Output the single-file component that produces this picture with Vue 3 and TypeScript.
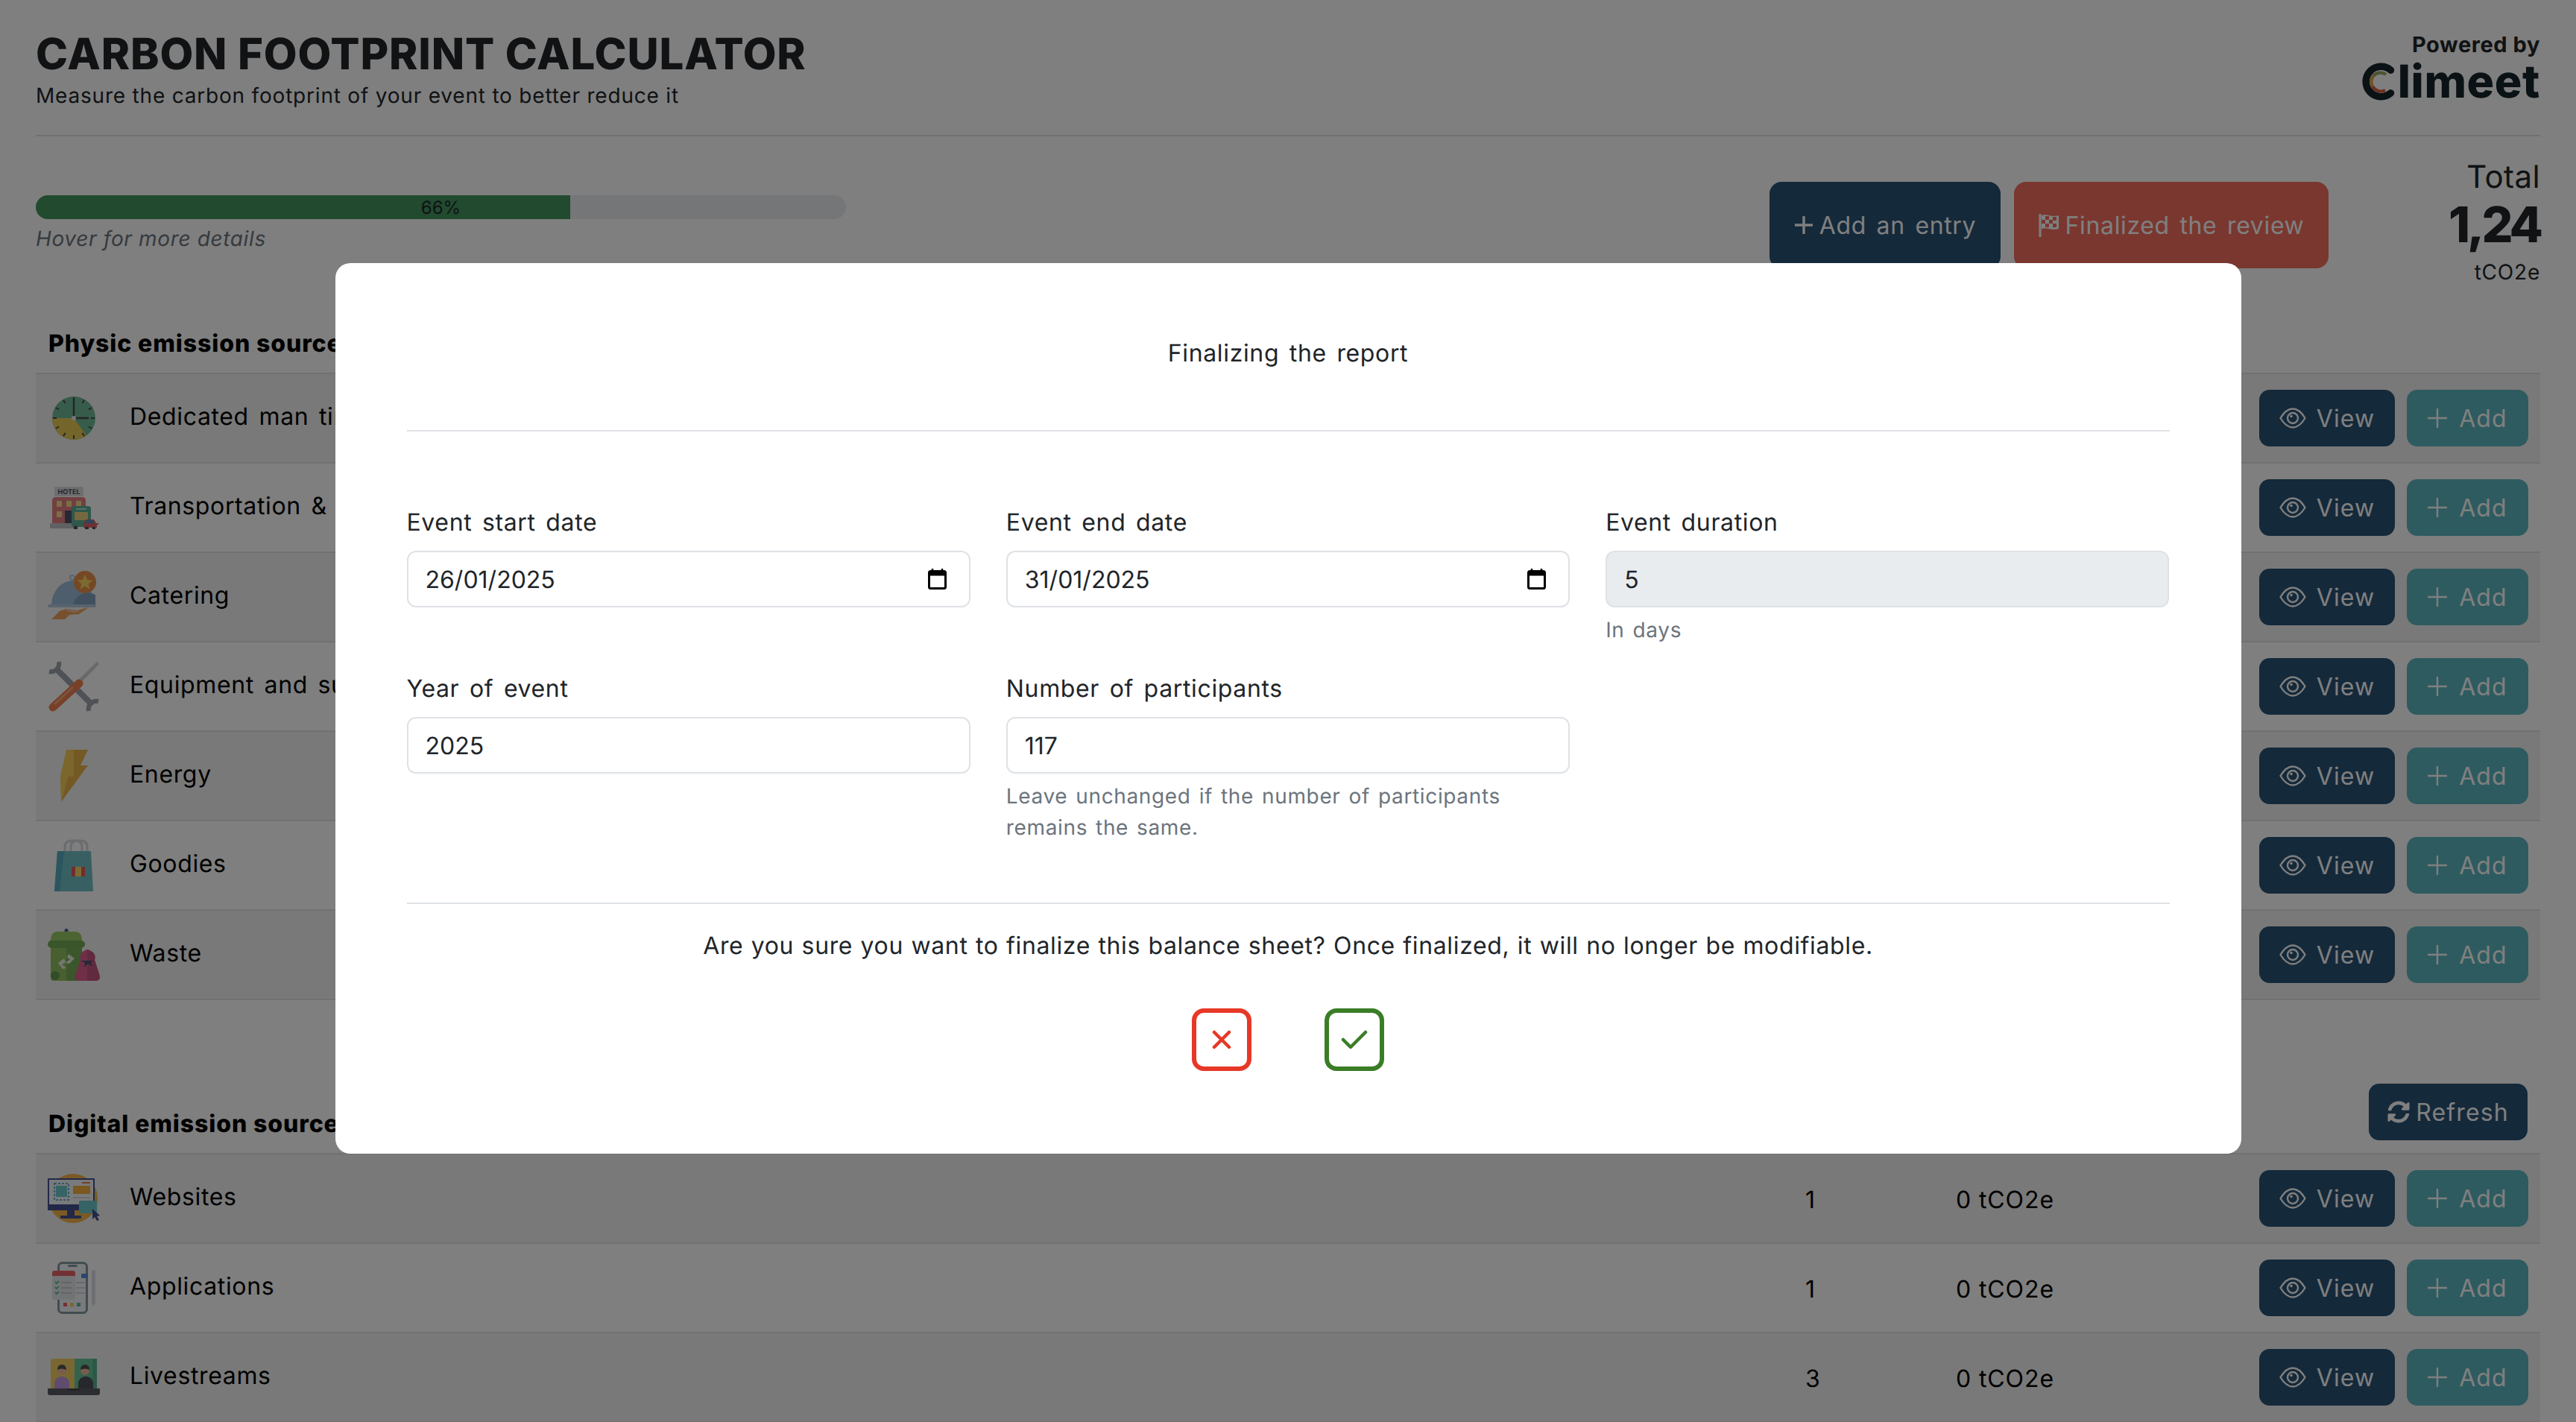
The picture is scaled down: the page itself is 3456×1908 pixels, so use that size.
<script setup lang="ts">
interface Source {
  key: string
  name: string
  count?: number
  co2?: string
}

const physicSources: Source[] = [
  { key: 'clock', name: 'Dedicated man time' },
  { key: 'hotel', name: 'Transportation & stay' },
  { key: 'catering', name: 'Catering' },
  { key: 'tools', name: 'Equipment and supply' },
  { key: 'energy', name: 'Energy' },
  { key: 'goodies', name: 'Goodies' },
  { key: 'waste', name: 'Waste' },
]

const digitalSources: Source[] = [
  { key: 'website', name: 'Websites', count: 1, co2: '0 tCO2e' },
  { key: 'app', name: 'Applications', count: 1, co2: '0 tCO2e' },
  { key: 'live', name: 'Livestreams', count: 3, co2: '0 tCO2e' },
]

const sections = [
  { title: 'Physic emission sources', refresh: false, rows: physicSources },
  { title: 'Digital emission sources', refresh: true, rows: digitalSources },
]

const progress = 66
const clockTicks = Array.from({ length: 12 }, (_, i) => i * 30)
</script>

<template>
  <div class="page">
    <header class="top">
      <div>
        <h1>CARBON FOOTPRINT CALCULATOR</h1>
        <p class="subtitle">Measure the carbon footprint of your event to better reduce it</p>
      </div>
      <div class="brand">
        <div class="powered">Powered by</div>
        <div class="logo">
          <svg class="logo-c" viewBox="0 0 44 48" width="47" height="51">
            <path d="M37 9.5A19 19 0 1 0 37 38.5" fill="none" stroke="#14252b" stroke-width="9" stroke-linecap="round" />
            <path d="M31 15A12 12 0 0 0 15 17" fill="none" stroke="#9aa860" stroke-width="4" />
            <path d="M15 17A12 12 0 0 0 14 30" fill="none" stroke="#d9a545" stroke-width="4" />
            <path d="M14 30A12 12 0 0 0 30 35" fill="none" stroke="#d9603a" stroke-width="4" />
          </svg>
          <span>limeet</span>
        </div>
      </div>
    </header>

    <section class="summary">
      <div class="progress-wrap">
        <div class="progress">
          <div class="progress-fill" :style="{ width: progress + '%' }"></div>
          <span>{{ progress }}%</span>
        </div>
        <em>Hover for more details</em>
      </div>
      <div class="summary-actions">
        <button class="btn btn-dark">
          <svg viewBox="0 0 26 26" width="26" height="26"><path d="M13 1v24M1 13h24" stroke="currentColor" stroke-width="3.4" /></svg>
          Add an entry
        </button>
        <button class="btn btn-red">
          <svg viewBox="0 0 28 32" width="28" height="32">
            <path d="M2 1v31" stroke="currentColor" stroke-width="3" />
            <path d="M4 3c7-3 12 3 23 0v18c-10 3-16-3-23 0z" fill="currentColor" />
            <path d="M9 4h5v5H9zM19 5h5v5h-5zM14 9h5v5h-5zM4 9h5v5H4zM9 14h5v5H9zM19 14h5v5h-5z" fill="#f46e5e" />
          </svg>
          Finalized the review
        </button>
      </div>
      <div class="total">
        <div class="total-label">Total</div>
        <div class="total-value">1,24</div>
        <div class="total-unit">tCO2e</div>
      </div>
    </section>

    <section v-for="section in sections" :key="section.title" class="sources" :class="{ 'with-refresh': section.refresh }">
      <div class="sources-head">
        <h2>{{ section.title }}</h2>
        <button v-if="section.refresh" class="btn btn-dark btn-refresh">
          <svg viewBox="0 0 512 512" width="30" height="30">
            <path fill="currentColor" d="M370.72 133.28C339.458 104.008 298.888 87.962 255.848 88c-77.458.068-144.328 53.178-162.791 126.85-1.344 5.363-6.122 9.15-11.651 9.15H24.103c-7.498 0-13.194-6.807-11.807-14.176C33.933 94.924 134.813 8 256 8c66.448 0 126.791 26.136 171.315 68.685L463.03 40.97C478.149 25.851 504 36.559 504 57.941V192c0 13.255-10.745 24-24 24H345.941c-21.382 0-32.09-25.851-16.971-40.971l41.75-41.749zM32 296h134.059c21.382 0 32.09 25.851 16.971 40.971l-41.75 41.75c31.262 29.273 71.835 45.319 114.876 45.28 77.418-.07 144.315-53.144 162.787-126.849 1.344-5.363 6.122-9.15 11.651-9.15h57.304c7.498 0 13.194 6.807 11.807 14.176C478.067 417.076 377.187 504 256 504c-66.448 0-126.791-26.136-171.315-68.685L48.97 471.03C33.851 486.149 8 475.441 8 454.059V320c0-13.255 10.745-24 24-24z" />
          </svg>
          Refresh
        </button>
      </div>
      <div class="rows">
        <div v-for="row in section.rows" :key="row.key" class="row">
          <svg class="row-icon" viewBox="0 0 70 70" width="70" height="70">
            <template v-if="row.key === 'clock'">
              <path d="M35 0A35 35 0 0 1 35 70A33 33 0 0 0 35 0Z" fill="#c4c6cc" />
              <circle cx="35" cy="35" r="29" fill="#58ae88" />
              <path d="M35 35L6 35A29 29 0 0 0 52 58.5Z" fill="#e8c53a" />
              <line v-for="a in clockTicks" :key="a" x1="35" y1="7" x2="35" y2="12" stroke="#2a2d33" stroke-width="2" :transform="`rotate(${a} 35 35)`" />
              <path d="M35 35V9M35 35H55" stroke="#2a2d33" stroke-width="2.4" fill="none" />
              <circle cx="35" cy="35" r="3" fill="#e9edf0" />
            </template>
            <template v-else-if="row.key === 'hotel'">
              <rect x="9" y="7" width="39" height="13" rx="2" fill="#d5d7dc" />
              <text x="28.5" y="17" text-anchor="middle" class="hotel-text">HOTEL</text>
              <path d="M6 56V26q0-5 5-5h35q5 0 5 5v30z" fill="#e0696e" />
              <rect x="12" y="26" width="7" height="8" rx="1" fill="#f6d77b" />
              <rect x="25" y="26" width="7" height="8" rx="1" fill="#f6d77b" />
              <rect x="38" y="26" width="7" height="8" rx="1" fill="#f6d77b" />
              <rect x="12" y="40" width="7" height="8" rx="1" fill="#f6d77b" />
              <rect x="23" y="39" width="12" height="17" fill="#2e3350" />
              <rect x="3" y="56" width="36" height="7" rx="1" fill="#b6b8be" />
              <rect x="32" y="33" width="26" height="28" rx="4" fill="#3fa385" />
              <rect x="36" y="41" width="18" height="11" rx="1" fill="#e8c86a" />
              <rect x="38" y="36" width="14" height="2" fill="#9fe0cc" />
              <rect x="35" y="60" width="5" height="4" fill="#2a2d33" />
              <rect x="50" y="60" width="5" height="4" fill="#2a2d33" />
              <path d="M48 62v-6l3-5h11l3 5h3v2h-2v4z" fill="#d8484e" />
              <path d="M52 52h9l2 4H50z" fill="#3578b5" />
              <rect x="50" y="61" width="4" height="3" fill="#2a2d33" />
              <rect x="60" y="61" width="4" height="3" fill="#2a2d33" />
            </template>
            <template v-else-if="row.key === 'catering'">
              <circle cx="33" cy="9" r="3" fill="none" stroke="#a9c3dc" stroke-width="2" />
              <path d="M5 46a29 33 0 0 1 58 0z" fill="#8fb3d4" />
              <path d="M34 46a20 18 0 0 1 30 -14v14z" fill="#6f93b6" />
              <rect x="0" y="45" width="65" height="4" rx="2" fill="#a9c3dc" />
              <circle cx="50" cy="15" r="15" fill="#e97f2e" />
              <path d="M50 5l3 7 7.500 .6-5.700 4.800 1.800 7.400-6.600-4-6.600 4 1.800-7.400-5.700-4.800 7.500-.6z" fill="#f8cf4a" />
              <path d="M5 65l11-11 9-3 14 2 16-4-13 9-13 1-6 6z" fill="#ef9440" />
              <path d="M25 51l14 2 5 1-8 2-11-2z" fill="#f6b48e" />
            </template>
            <template v-else-if="row.key === 'tools'">
              <path d="M66 2l3 3-29 30-4-4z" fill="#c8cbd2" />
              <path d="M12 12L58 58" stroke="#8d929c" stroke-width="8" />
              <path d="M2 15A11 11 0 0 0 15 2" fill="none" stroke="#8d929c" stroke-width="6" />
              <path d="M68 55A11 11 0 0 0 55 68" fill="none" stroke="#8d929c" stroke-width="6" />
              <path d="M42 31L7 63" stroke="#ef6a33" stroke-width="11" stroke-linecap="round" />
              <path d="M34 36L9 59" stroke="#f49b6b" stroke-width="3" />
            </template>
            <template v-else-if="row.key === 'energy'">
              <path d="M25 0H35V36H27L18 70L17 36Z" fill="#f7c63b" />
              <path d="M35 0H54L44 21H54L18 70L27 36H35Z" fill="#e7a92e" />
            </template>
            <template v-else-if="row.key === 'goodies'">
              <path d="M23 24V11q0-9 9-9h5q9 0 9 9v13M31 24V11q0-9 9-9h4q9 0 9 9v13" fill="none" stroke="#cfd2d8" stroke-width="3" />
              <path d="M13 16H58L61 70H9Z" fill="#58b7bd" />
              <path d="M13 16H22L16 70H9Z" fill="#3b9fb5" />
              <rect x="32" y="37" width="18" height="13" fill="#e33a4a" />
              <rect x="37" y="37" width="8" height="13" fill="#f6d04d" />
            </template>
            <template v-else-if="row.key === 'waste'">
              <circle cx="25" cy="2.500" r="2.500" fill="#33407a" />
              <path d="M4 16q0-12 10-12h22q10 0 10 12z" fill="#89c24a" />
              <rect x="0" y="16" width="50" height="10" rx="5" fill="#5f9e3a" />
              <path d="M4 26H46V70H8q-4 0-4-4z" fill="#7fb845" />
              <path d="M25 26H46V70H25z" fill="#62a03c" />
              <path d="M14 46l8-6 2 5-5 3 6 5-5 1zM36 40l-8-6-2 5 4 2-6 5 5 1z" fill="#e9efe0" />
              <circle cx="10" cy="63" r="6" fill="#4c8a34" />
              <path d="M44 42q-3-10 9-14 13 4 10 14l7 22q0 6-6 6H43q-7 0-7-6z" fill="#d9457d" />
              <path d="M53 28q13 4 10 14l7 22q0 6-6 6H53z" fill="#bd3a6a" />
              <path d="M44 43h18l-4 2 2 6-6-4-5 5 1-6z" fill="#2e3560" />
            </template>
            <template v-else-if="row.key === 'website'">
              <circle cx="34" cy="35" r="33" fill="#f5ab2e" />
              <rect x="0" y="8" width="63" height="43" rx="1" fill="#27347f" />
              <rect x="2" y="10" width="59" height="33" fill="#f3f5f8" />
              <rect x="9" y="15" width="19" height="22" fill="none" stroke="#4aa3c9" stroke-width="2" stroke-dasharray="3 2" />
              <rect x="11" y="18" width="15" height="15" fill="#55c3c4" />
              <rect x="34" y="18" width="23" height="11" fill="#f5a623" />
              <rect x="46" y="13" width="11" height="2" fill="#e4692f" />
              <rect x="34" y="33" width="23" height="2" fill="#cfd5dd" />
              <rect x="26" y="51" width="10" height="7" fill="#27347f" />
              <rect x="17" y="58" width="28" height="4" rx="1" fill="#27347f" />
              <rect x="42" y="38" width="24" height="17" rx="2" fill="#55c3c4" />
              <path d="M60 49l10 9-4 1 3 5-3 1-3-5-3 3z" fill="#27347f" />
            </template>
            <template v-else-if="row.key === 'app'">
              <rect x="14.500" y="1.500" width="38" height="67" rx="5" fill="#f2f4f7" stroke="#6f8794" stroke-width="3" />
              <rect x="27" y="4" width="13" height="3" rx="1.500" fill="#6f8794" />
              <rect x="45" y="16" width="9" height="6" fill="#3a7bd5" />
              <rect x="6" y="12" width="31" height="39" rx="3" fill="#dfe2e6" />
              <path d="M6 19v-4q0-3 3-3h25q3 0 3 3v4z" fill="#e5484d" />
              <path d="M10 27l2 2 3-3M10 34l2 2 3-3M10 41l2 2 3-3" stroke="#3fb27f" stroke-width="1.800" fill="none" />
              <path d="M18 28h14M18 35h14M18 42h14M38 28h12M38 35h12M38 42h12" stroke="#9aa3ad" stroke-width="1.200" />
              <rect x="21" y="55" width="5" height="5" fill="#e5484d" />
              <rect x="30" y="55" width="5" height="5" fill="#f1c644" />
              <rect x="39" y="55" width="5" height="5" fill="#3fb27f" />
              <path d="M59 12l5-1v44l-2.500 5-2.500-5z" fill="#d5d8dd" />
            </template>
            <template v-else-if="row.key === 'live'">
              <path d="M4 50V13q0-3 3-3h29v40z" fill="#f2c84b" />
              <path d="M36 10h27q3 0 3 3v37H36z" fill="#4fc08d" />
              <rect x="60" y="10" width="6" height="40" fill="#3aa878" />
              <path d="M9 50v-8q1-6 8-8h4q7 2 8 8v8z" fill="#b98ad9" />
              <circle cx="19" cy="26" r="6" fill="#f0b08e" />
              <path d="M13 25q0-7 6-7t6 7q-6-3-12 0z" fill="#3a3336" />
              <path d="M41 50v-8q1-6 8-8h4q7 2 8 8v8z" fill="#33363c" />
              <circle cx="50" cy="26" r="6" fill="#f0b08e" />
              <path d="M44 25q0-7 6-7t6 7q-6-3-12 0z" fill="#3a3336" />
              <path d="M0 50H70V56q0 3-3 3H3q-3 0-3-3z" fill="#3e4149" />
              <rect x="27" y="50" width="16" height="3" fill="#2a2c31" />
            </template>
          </svg>
          <div class="row-name">{{ row.name }}</div>
          <div class="row-count">{{ row.count }}</div>
          <div class="row-co2">{{ row.co2 }}</div>
          <div class="row-actions">
            <button class="btn btn-dark btn-view">
              <svg viewBox="0 0 36 28" width="36" height="28" fill="none" stroke="currentColor" stroke-width="2.400">
                <path d="M1.500 14Q9 1.500 18 1.500T34.500 14Q27 26.500 18 26.500T1.500 14Z" />
                <circle cx="18" cy="14" r="7" />
                <circle cx="16" cy="11.500" r="1.800" fill="currentColor" stroke="none" />
              </svg>
              View
            </button>
            <button class="btn btn-teal btn-add">
              <svg viewBox="0 0 26 26" width="26" height="26"><path d="M13 0v26M0 13h26" stroke="currentColor" stroke-width="2.400" /></svg>
              Add
            </button>
          </div>
        </div>
      </div>
    </section>

    <div class="backdrop">
      <div class="modal">
        <div class="modal-title">Finalizing the report</div>
        <div class="modal-form">
          <div class="field">
            <label>Event start date</label>
            <div class="input">
              <span>26/01/2025</span>
              <svg viewBox="0 0 25 28" width="25" height="28"><path d="M6 0v4M19 0v4" stroke="#000" stroke-width="2.500" /><rect x="1.500" y="3.500" width="22" height="23" rx="2" fill="none" stroke="#000" stroke-width="3" /><rect x="1.500" y="3.500" width="22" height="6" fill="#000" /></svg>
            </div>
          </div>
          <div class="field">
            <label>Event end date</label>
            <div class="input">
              <span>31/01/2025</span>
              <svg viewBox="0 0 25 28" width="25" height="28"><path d="M6 0v4M19 0v4" stroke="#000" stroke-width="2.500" /><rect x="1.500" y="3.500" width="22" height="23" rx="2" fill="none" stroke="#000" stroke-width="3" /><rect x="1.500" y="3.500" width="22" height="6" fill="#000" /></svg>
            </div>
          </div>
          <div class="field">
            <label>Event duration</label>
            <div class="input input-disabled"><span>5</span></div>
            <small>In days</small>
          </div>
          <div class="field">
            <label>Year of event</label>
            <div class="input"><span>2025</span></div>
          </div>
          <div class="field">
            <label>Number of participants</label>
            <div class="input"><span>117</span></div>
            <small>Leave unchanged if the number of participants remains the same.</small>
          </div>
        </div>
        <p class="modal-question">Are you sure you want to finalize this balance sheet? Once finalized, it will no longer be modifiable.</p>
        <div class="modal-buttons">
          <button class="square square-red">
            <svg viewBox="0 0 26 26" width="26" height="26"><path d="M3 3l20 20M23 3L3 23" stroke="currentColor" stroke-width="4.500" stroke-linecap="round" /></svg>
          </button>
          <button class="square square-green">
            <svg viewBox="0 0 36 26" width="36" height="26"><path d="M3 13l10 10L33 3" fill="none" stroke="currentColor" stroke-width="4.500" stroke-linecap="round" stroke-linejoin="round" /></svg>
          </button>
        </div>
      </div>
    </div>
  </div>
</template>

<style>
html,
body {
  margin: 0;
  height: 100%;
  overflow: hidden;
  background: #fff;
}
</style>

<style scoped>
.page {
  box-sizing: border-box;
  height: 1908px;
  padding: 0 48px;
  overflow: hidden;
  font-family: Inter, "Liberation Sans", sans-serif;
  color: #212529;
  letter-spacing: 0.04em;
  text-rendering: geometricPrecision;
}

.top {
  box-sizing: border-box;
  height: 183px;
  display: flex;
  justify-content: space-between;
  border-bottom: 2px solid #dee2e6;
}

h1 {
  margin: 0;
  padding-top: 38px;
  font-size: 58px;
  line-height: 69px;
  font-weight: 800;
  letter-spacing: 0.015em;
}

.subtitle {
  margin: 4px 0 0;
  font-size: 28px;
  line-height: 34px;
  letter-spacing: 0.0285em;
}

.brand {
  text-align: right;
  padding-top: 45px;
}

.powered {
  font-size: 29px;
  line-height: 30px;
  font-weight: 700;
  letter-spacing: 0.02em;
}

.logo {
  display: flex;
  justify-content: flex-end;
  align-items: center;
  height: 54px;
  margin-top: 7px;
  color: #14252b;
  font-size: 61px;
  font-weight: 800;
  letter-spacing: 0.01em;
  line-height: 54px;
}

.logo-c {
  margin-right: 2px;
}

.summary {
  display: flex;
  align-items: flex-start;
  margin-top: 30px;
}

.progress-wrap {
  width: 1087px;
  margin-top: 49px;
}

.progress {
  position: relative;
  height: 32px;
  border-radius: 16px;
  background: #e9ecef;
  overflow: hidden;
  text-align: center;
  font-size: 24px;
  line-height: 34px;
  letter-spacing: 0;
}

.progress-fill {
  position: absolute;
  inset: 0 auto 0 0;
  background: #42945e;
}

.progress span {
  position: relative;
}

em {
  display: block;
  margin-top: 8px;
  font-size: 28px;
  line-height: 36px;
  color: #6c757d;
}

.summary-actions {
  display: flex;
  gap: 18px;
  margin: 31px 0 0 auto;
}

.btn {
  display: flex;
  align-items: center;
  justify-content: center;
  gap: 8px;
  box-sizing: border-box;
  height: 76px;
  border: 0;
  padding: 0;
  border-radius: 14px;
  color: #fff;
  font: inherit;
  font-size: 32px;
  letter-spacing: inherit;
}

.summary-actions .btn {
  height: 116px;
  border-radius: 16px;
  word-spacing: 4px;
}

.summary-actions .btn-dark {
  width: 310px;
}

.btn-red {
  width: 422px;
  background: #f46e5e;
}

.btn-dark {
  background: #285274;
}

.btn-teal {
  background: #5cb6be;
}

.btn-view,
.btn-add,
.btn-refresh {
  letter-spacing: 0.035em;
}

.total {
  width: 284px;
  text-align: right;
}

.total-label {
  font-size: 42px;
  line-height: 50px;
  letter-spacing: 0.01em;
}

.total-value {
  font-size: 66px;
  line-height: 76px;
  font-weight: 800;
  letter-spacing: -0.06em;
}

.total-unit {
  margin-top: 9px;
  font-size: 28px;
  line-height: 34px;
  letter-spacing: 0.028em;
}

.sources {
  margin-top: 59px;
}

.sources.with-refresh {
  margin-top: 112px;
}

.sources-head {
  display: flex;
  justify-content: space-between;
  align-items: flex-end;
  padding: 0 17px;
}

h2 {
  margin: 0;
  padding-bottom: 19px;
  font-size: 32px;
  line-height: 40px;
  font-weight: 800;
  color: #000;
  letter-spacing: 0.028em;
}

.btn-refresh {
  width: 213px;
  margin-bottom: 17px;
}

.rows {
  border-bottom: 2px solid #dee2e6;
}

.row {
  box-sizing: border-box;
  height: 120px;
  display: flex;
  align-items: center;
  padding: 0 16px;
  border-top: 2px solid #dee2e6;
  font-size: 32px;
  color: #000;
}

.row:nth-child(odd) {
  background: #f2f2f2;
}

.row-icon {
  flex: none;
  margin-right: 40px;
  opacity: 0.85;
}

.row-name {
  flex: 1;
  padding-bottom: 6px;
  word-spacing: 4px;
}

.row-count {
  width: 202px;
  padding-top: 2px;
  letter-spacing: 0.028em;
}

.row-co2 {
  width: 407px;
  padding-top: 2px;
  letter-spacing: 0.028em;
}

.row-actions {
  display: flex;
  gap: 16px;
}

.btn-view {
  width: 182px;
  gap: 14px;
}

.btn-add {
  width: 163px;
  gap: 16px;
}

.backdrop {
  position: fixed;
  inset: 0;
  display: flex;
  align-items: center;
  justify-content: center;
  padding-bottom: 7px;
  box-sizing: border-box;
  background: rgba(0, 0, 0, 0.5);
}

.modal {
  box-sizing: border-box;
  width: 2557px;
  height: 1195px;
  padding: 0 96px;
  background: #fff;
  border-radius: 20px;
}

.modal-title {
  height: 226px;
  box-sizing: border-box;
  padding-top: 101px;
  border-bottom: 2px solid #dee2e6;
  text-align: center;
  font-size: 32px;
  line-height: 40px;
  word-spacing: 4px;
}

.modal-form {
  display: grid;
  grid-template-columns: repeat(3, 1fr);
  column-gap: 48px;
  row-gap: 38px;
  grid-template-rows: 185px auto;
  padding: 102px 0 80px;
  border-bottom: 2px solid #dee2e6;
}

label {
  display: block;
  margin-bottom: 18px;
  font-size: 32px;
  line-height: 40px;
  word-spacing: 4px;
}

.input {
  box-sizing: border-box;
  height: 76px;
  display: flex;
  align-items: center;
  justify-content: space-between;
  padding: 0 30px 0 23px;
  border: 2px solid #dee2e6;
  border-radius: 12px;
  font-size: 32px;
  letter-spacing: 0;
}

.input-disabled {
  background: #e9ecef;
}

small {
  display: block;
  margin-top: 9px;
  font-size: 28px;
  line-height: 42px;
  color: #6c757d;
  word-spacing: 2.5px;
}

.modal-question {
  margin: 36px 0 0;
  text-align: center;
  font-size: 32px;
  line-height: 40px;
  word-spacing: 0.8px;
}

.modal-buttons {
  display: flex;
  justify-content: center;
  gap: 98px;
  margin-top: 64px;
}

.square {
  width: 80px;
  height: 84px;
  display: flex;
  align-items: center;
  justify-content: center;
  box-sizing: border-box;
  padding: 0;
  background: #fff;
  border: 6px solid currentColor;
  border-radius: 16px;
}

.square-red {
  color: #e73827;
}

.square-green {
  color: #3a7d26;
}

.hotel-text {
  font-size: 9px;
  font-weight: 700;
  fill: #2a2d33;
  letter-spacing: 0;
}
</style>
